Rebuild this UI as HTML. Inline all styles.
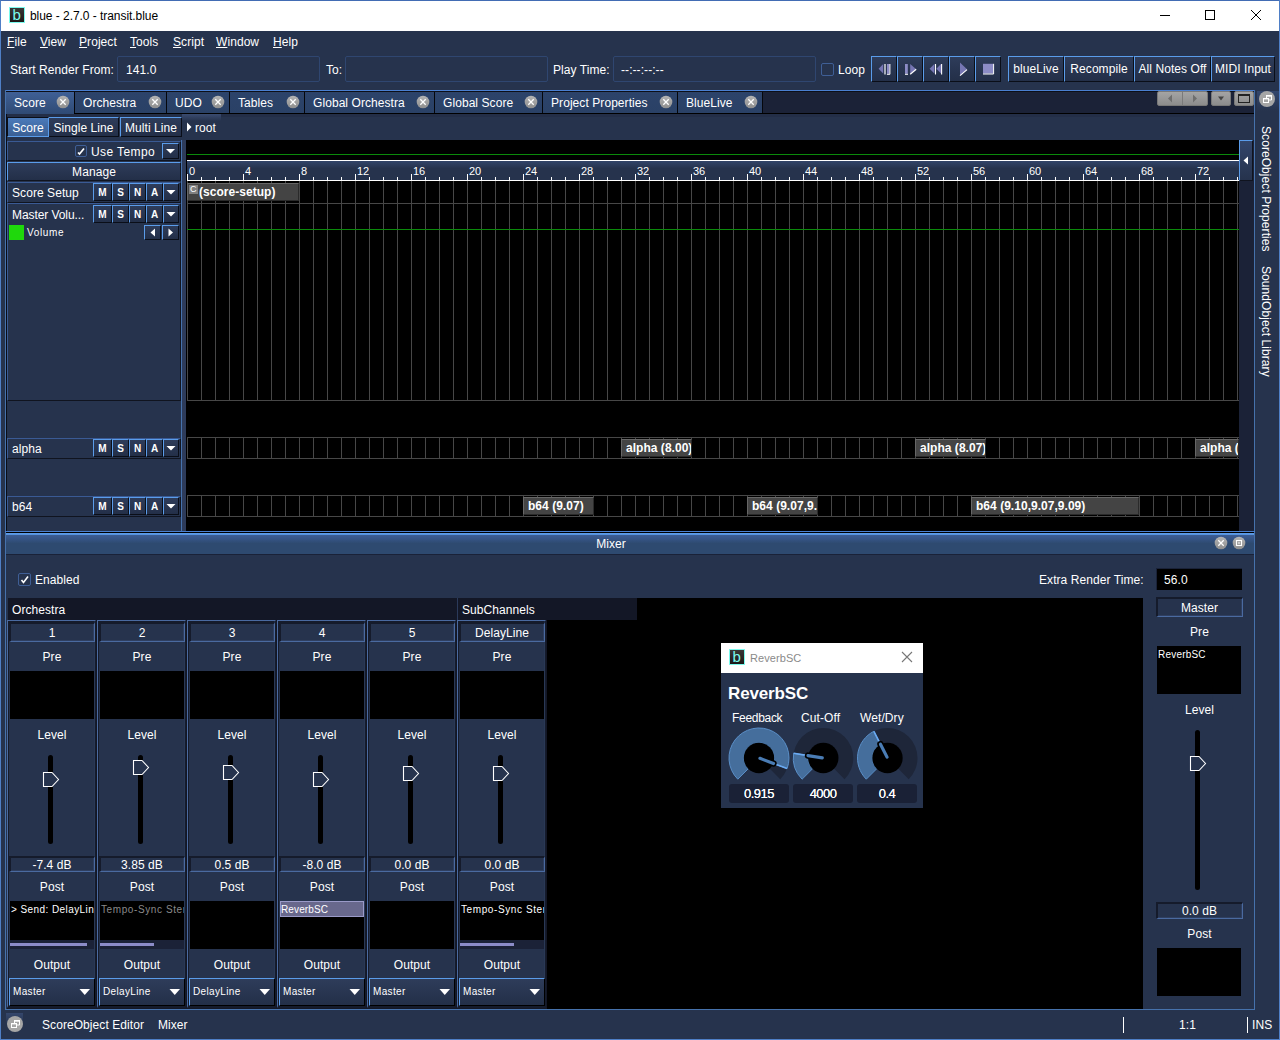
<!DOCTYPE html><html><head><meta charset="utf-8"><title>blue - 2.7.0 - transit.blue</title><style>
*{box-sizing:border-box;margin:0;padding:0}
html,body{width:1280px;height:1040px;overflow:hidden;background:#26334d}
body{font-family:"Liberation Sans",sans-serif;font-size:12px;letter-spacing:.07px;color:#fff;position:relative}
.a{position:absolute}
.t{position:absolute;white-space:nowrap;line-height:16px;height:16px}
.btn{position:absolute;border-top:1px solid #5a9cea;border-left:1px solid #5a9cea;border-right:1px solid #0a0e18;border-bottom:1px solid #0a0e18;background:linear-gradient(#2e3c5a,#232f48);text-align:center;white-space:nowrap;overflow:hidden}
.fld{position:absolute;border:1px solid #2f4670;border-radius:2px;background:#26334d}
.blk{position:absolute;background:#000}
.c{text-align:center}
u{text-decoration:underline}
</style></head><body>
<div class="a" style="left:0;top:0;width:1280px;height:31px;background:#fff;border-top:1px solid #426cb4;border-left:1px solid #4f7fc6"></div>
<div class="a" style="left:0;top:31px;width:1px;height:1009px;background:#4f7fc6"></div>
<div class="a" style="left:9px;top:7px;width:16px;height:16px;background:linear-gradient(#3a3636,#1c1818);border:1px solid #7cfaee"></div>
<div class="t" style="left:12.500px;top:7px;font-size:15px;color:#7cfaee">b</div>
<div class="t" style="left:30px;top:8px;font-size:12px;letter-spacing:-.05px;color:#000">blue - 2.7.0 - transit.blue</div>
<svg class="a" style="left:1150px;top:5px" width="125" height="22" viewBox="0 0 125 22"><g stroke="#000" stroke-width="1" fill="none"><path d="M10 10.500h10"/><rect x="55.500" y="5.500" width="9" height="9"/><path d="M101 5l10 10M111 5l-10 10"/></g></svg>
<div class="t" style="left:7px;top:34px"><u>F</u>ile</div>
<div class="t" style="left:40px;top:34px"><u>V</u>iew</div>
<div class="t" style="left:79px;top:34px"><u>P</u>roject</div>
<div class="t" style="left:130px;top:34px"><u>T</u>ools</div>
<div class="t" style="left:173px;top:34px"><u>S</u>cript</div>
<div class="t" style="left:216px;top:34px"><u>W</u>indow</div>
<div class="t" style="left:273px;top:34px"><u>H</u>elp</div>
<div class="t" style="left:10px;top:62px">Start Render From:</div>
<div class="fld" style="left:117px;top:56px;width:203px;height:26px"></div>
<div class="t" style="left:126px;top:62px">141.0</div>
<div class="t" style="left:326px;top:62px">To:</div>
<div class="fld" style="left:345px;top:56px;width:203px;height:26px"></div>
<div class="t" style="left:553px;top:62px">Play Time:</div>
<div class="fld" style="left:613px;top:56px;width:203px;height:26px"></div>
<div class="t" style="left:621px;top:62px">--:--:--:--</div>
<div class="a" style="left:821px;top:63px;width:13px;height:13px;border:1px solid #3f5f96;border-radius:2px"></div>
<div class="t" style="left:838px;top:62px">Loop</div>
<div class="btn" style="left:871px;top:56px;width:26px;height:26px"></div><svg class="a" style="left:871px;top:56px" width="26" height="26" viewBox="0 0 26 26"><path d="M12.200 8v9.600L7.600 12.800z" fill="#7676b4"/><path d="M14 8v10.400" stroke="#fff" stroke-width="1.200"/><rect x="16" y="8" width="2.400" height="9.800" fill="#8c8cc6"/><path d="M18.900 8v10.300h-3" stroke="#fff" stroke-width="1" fill="none"/></svg>
<div class="btn" style="left:897px;top:56px;width:26px;height:26px"></div><svg class="a" style="left:897px;top:56px" width="26" height="26" viewBox="0 0 26 26"><rect x="8" y="8" width="2.800" height="9.800" fill="#8c8cc6"/><path d="M8 18.300h3" stroke="#fff" stroke-width="1"/><path d="M13.200 8v9.800l6-4.600z" fill="#7676b4"/><path d="M13.200 18.300l6-5" stroke="#fff" stroke-width="1.200"/></svg>
<div class="btn" style="left:923px;top:56px;width:26px;height:26px"></div><svg class="a" style="left:923px;top:56px" width="26" height="26" viewBox="0 0 26 26"><path d="M11.400 8v9.600L6.600 12.800z" fill="#7676b4"/><path d="M12.500 8v10.500" stroke="#fff" stroke-width="1.100"/><path d="M18 8v9.600l-4.600-4.800z" fill="#7676b4"/><path d="M18.600 8v10.500" stroke="#fff" stroke-width="1.100"/></svg>
<div class="btn" style="left:949px;top:56px;width:26px;height:26px"></div><svg class="a" style="left:949px;top:56px" width="26" height="26" viewBox="0 0 26 26"><path d="M11 6.500v13l7-6.300z" fill="#7676b4"/><path d="M11 19.600l7-6" stroke="#fff" stroke-width="1.200"/></svg>
<div class="btn" style="left:975px;top:56px;width:26px;height:26px"></div><svg class="a" style="left:975px;top:56px" width="26" height="26" viewBox="0 0 26 26"><rect x="8" y="7.800" width="10" height="9.800" fill="#8c8cc6"/><path d="M18.600 7.800v10.200H8" stroke="#fff" stroke-width="1" fill="none"/></svg>
<div class="btn" style="left:1008px;top:56px;width:56px;height:26px;line-height:25px">blueLive</div>
<div class="btn" style="left:1064px;top:56px;width:70px;height:26px;line-height:25px">Recompile</div>
<div class="btn" style="left:1134px;top:56px;width:77px;height:26px;line-height:25px">All Notes Off</div>
<div class="btn" style="left:1211px;top:56px;width:64px;height:26px;line-height:25px">MIDI Input</div>
<div class="a" style="left:6px;top:90px;width:1249px;height:1px;background:#4a7fd0"></div>
<div class="a" style="left:6px;top:91px;width:1249px;height:1px;background:#0c0f18"></div>
<div class="a" style="left:6px;top:92px;width:1249px;height:21px;background:#1b2237"></div>
<div class="a" style="left:6px;top:113px;width:1249px;height:1px;background:#000"></div>
<div class="a" style="left:6px;top:114px;width:1249px;height:3px;background:#232e47"></div>
<div class="a" style="left:5px;top:90px;width:1px;height:442px;background:#4672ac"></div>
<div class="a" style="left:6px;top:114px;width:1px;height:417px;background:#0a0d16"></div>
<div class="a" style="left:1254px;top:90px;width:1px;height:442px;background:#4672ac"></div>
<div class="a" style="left:6px;top:92px;width:68px;height:22px;background:linear-gradient(#3f6096,#2f4a74)"></div>
<div class="a" style="left:74px;top:92px;width:1px;height:21px;background:#05070c"></div>
<div class="t" style="left:14px;top:95px">Score</div>
<svg class="a" style="left:56px;top:95px" width="14" height="14" viewBox="0 0 14 14"><defs><linearGradient id="cg0" x1="0" y1="0" x2="0" y2="1"><stop offset="0" stop-color="#b4b4b4"/><stop offset="1" stop-color="#8e8e8e"/></linearGradient></defs><circle cx="7" cy="7" r="6.300" fill="url(#cg0)"/><path d="M4.300 4.300l5.400 5.400M9.700 4.300l-5.400 5.400" stroke="#fff" stroke-width="1.300"/></svg>
<div class="a" style="left:75px;top:92px;width:92px;height:21px;background:linear-gradient(#2c436a,#2a4166);border-right:1px solid #05070c"></div>
<div class="t" style="left:83px;top:95px">Orchestra</div>
<svg class="a" style="left:148px;top:95px" width="14" height="14" viewBox="0 0 14 14"><defs><linearGradient id="cg1" x1="0" y1="0" x2="0" y2="1"><stop offset="0" stop-color="#b4b4b4"/><stop offset="1" stop-color="#8e8e8e"/></linearGradient></defs><circle cx="7" cy="7" r="6.300" fill="url(#cg1)"/><path d="M4.300 4.300l5.400 5.400M9.700 4.300l-5.400 5.400" stroke="#fff" stroke-width="1.300"/></svg>
<div class="a" style="left:167px;top:92px;width:63px;height:21px;background:linear-gradient(#2c436a,#2a4166);border-right:1px solid #05070c"></div>
<div class="t" style="left:175px;top:95px">UDO</div>
<svg class="a" style="left:211px;top:95px" width="14" height="14" viewBox="0 0 14 14"><defs><linearGradient id="cg2" x1="0" y1="0" x2="0" y2="1"><stop offset="0" stop-color="#b4b4b4"/><stop offset="1" stop-color="#8e8e8e"/></linearGradient></defs><circle cx="7" cy="7" r="6.300" fill="url(#cg2)"/><path d="M4.300 4.300l5.400 5.400M9.700 4.300l-5.400 5.400" stroke="#fff" stroke-width="1.300"/></svg>
<div class="a" style="left:230px;top:92px;width:75px;height:21px;background:linear-gradient(#2c436a,#2a4166);border-right:1px solid #05070c"></div>
<div class="t" style="left:238px;top:95px">Tables</div>
<svg class="a" style="left:286px;top:95px" width="14" height="14" viewBox="0 0 14 14"><defs><linearGradient id="cg3" x1="0" y1="0" x2="0" y2="1"><stop offset="0" stop-color="#b4b4b4"/><stop offset="1" stop-color="#8e8e8e"/></linearGradient></defs><circle cx="7" cy="7" r="6.300" fill="url(#cg3)"/><path d="M4.300 4.300l5.400 5.400M9.700 4.300l-5.400 5.400" stroke="#fff" stroke-width="1.300"/></svg>
<div class="a" style="left:305px;top:92px;width:130px;height:21px;background:linear-gradient(#2c436a,#2a4166);border-right:1px solid #05070c"></div>
<div class="t" style="left:313px;top:95px">Global Orchestra</div>
<svg class="a" style="left:416px;top:95px" width="14" height="14" viewBox="0 0 14 14"><defs><linearGradient id="cg4" x1="0" y1="0" x2="0" y2="1"><stop offset="0" stop-color="#b4b4b4"/><stop offset="1" stop-color="#8e8e8e"/></linearGradient></defs><circle cx="7" cy="7" r="6.300" fill="url(#cg4)"/><path d="M4.300 4.300l5.400 5.400M9.700 4.300l-5.400 5.400" stroke="#fff" stroke-width="1.300"/></svg>
<div class="a" style="left:435px;top:92px;width:108px;height:21px;background:linear-gradient(#2c436a,#2a4166);border-right:1px solid #05070c"></div>
<div class="t" style="left:443px;top:95px">Global Score</div>
<svg class="a" style="left:524px;top:95px" width="14" height="14" viewBox="0 0 14 14"><defs><linearGradient id="cg5" x1="0" y1="0" x2="0" y2="1"><stop offset="0" stop-color="#b4b4b4"/><stop offset="1" stop-color="#8e8e8e"/></linearGradient></defs><circle cx="7" cy="7" r="6.300" fill="url(#cg5)"/><path d="M4.300 4.300l5.400 5.400M9.700 4.300l-5.400 5.400" stroke="#fff" stroke-width="1.300"/></svg>
<div class="a" style="left:543px;top:92px;width:135px;height:21px;background:linear-gradient(#2c436a,#2a4166);border-right:1px solid #05070c"></div>
<div class="t" style="left:551px;top:95px">Project Properties</div>
<svg class="a" style="left:659px;top:95px" width="14" height="14" viewBox="0 0 14 14"><defs><linearGradient id="cg6" x1="0" y1="0" x2="0" y2="1"><stop offset="0" stop-color="#b4b4b4"/><stop offset="1" stop-color="#8e8e8e"/></linearGradient></defs><circle cx="7" cy="7" r="6.300" fill="url(#cg6)"/><path d="M4.300 4.300l5.400 5.400M9.700 4.300l-5.400 5.400" stroke="#fff" stroke-width="1.300"/></svg>
<div class="a" style="left:678px;top:92px;width:85px;height:21px;background:linear-gradient(#2c436a,#2a4166);border-right:1px solid #05070c"></div>
<div class="t" style="left:686px;top:95px">BlueLive</div>
<svg class="a" style="left:744px;top:95px" width="14" height="14" viewBox="0 0 14 14"><defs><linearGradient id="cg7" x1="0" y1="0" x2="0" y2="1"><stop offset="0" stop-color="#b4b4b4"/><stop offset="1" stop-color="#8e8e8e"/></linearGradient></defs><circle cx="7" cy="7" r="6.300" fill="url(#cg7)"/><path d="M4.300 4.300l5.400 5.400M9.700 4.300l-5.400 5.400" stroke="#fff" stroke-width="1.300"/></svg>
<div class="a" style="left:1157px;top:91px;width:51px;height:15px;background:linear-gradient(#a4a4a4,#8c8c8c);border:1px solid #787878;border-radius:2px"></div>
<div class="a" style="left:1182px;top:92px;width:1px;height:13px;background:#7a7a7a"></div>
<svg class="a" style="left:1157px;top:91px" width="51" height="15"><path d="M15 3.5v8l-4-4zM36 3.5v8l4-4z" fill="#6e6e6e"/></svg>
<div class="a" style="left:1211px;top:91px;width:20px;height:15px;background:linear-gradient(#a4a4a4,#8c8c8c);border:1px solid #787878;border-radius:2px"></div>
<svg class="a" style="left:1211px;top:91px" width="20" height="15"><path d="M7 5.5h6l-3 4z" fill="#444"/></svg>
<div class="a" style="left:1234px;top:91px;width:20px;height:15px;background:linear-gradient(#a4a4a4,#8c8c8c);border:1px solid #787878;border-radius:2px"></div>
<div class="a" style="left:1238px;top:94px;width:12px;height:9px;border:1px solid #222;border-top:2px solid #222"></div>
<div class="a" style="left:1257px;top:91px;width:23px;height:20px;background:linear-gradient(#33466c,#26334d)"></div>
<svg class="a" style="left:1259px;top:91px" width="16" height="16" viewBox="0 0 16 16"><circle cx="8" cy="8" r="8" fill="#a6a6a6"/><path d="M7.500 7v-2h5v4h-2.500" stroke="#fff" stroke-width="1" fill="none"/><path d="M7 4.700h6" stroke="#fff" stroke-width="1.400"/><rect x="4.500" y="7.500" width="5" height="4" stroke="#fff" stroke-width="1" fill="none"/><path d="M4 7.700h6" stroke="#fff" stroke-width="1.400"/></svg>
<div class="t" style="left:1258px;top:126px;transform-origin:0 0;transform:translate(16px,0) rotate(90deg)">ScoreObject Properties</div>
<div class="t" style="left:1258px;top:266px;transform-origin:0 0;transform:translate(16px,0) rotate(90deg)">SoundObject Library</div>
<div class="btn" style="left:7px;top:117px;width:42px;height:20px;line-height:20px;background:linear-gradient(#4b7aba,#3a5f94);border-top-color:#0a0e18;border-left-color:#0a0e18;border-right-color:#5a9cea;border-bottom-color:#5a9cea">Score</div>
<div class="btn" style="left:49px;top:117px;width:70px;height:20px;line-height:20px;border-left:none">Single Line</div>
<div class="btn" style="left:120px;top:117px;width:62px;height:20px;line-height:20px">Multi Line</div>
<div class="a" style="left:182px;top:114px;width:39px;height:7px;background:linear-gradient(#3a4b70,#26334d)"></div>
<svg class="a" style="left:186px;top:122px" width="6" height="10"><path d="M1 0.500v9l4.500-4.500z" fill="#fff"/></svg>
<div class="t" style="left:195px;top:120px">root</div>
<div class="a" style="left:7px;top:141px;width:174px;height:20px;border-top:1px solid #3a5a94;border-left:1px solid #3a5a94;border-bottom:1px solid #10141f;border-right:1px solid #10141f"></div>
<div class="a" style="left:75px;top:145px;width:12px;height:12px;border:1px solid #3f5f96;border-radius:2px"></div>
<svg class="a" style="left:75px;top:145px" width="12" height="12"><path d="M3 7.500l1.500 1.500L9 3.500" stroke="#fff" stroke-width="1.700" fill="none"/></svg>
<div class="t" style="left:91px;top:144px;letter-spacing:.4px">Use Tempo</div>
<div class="btn" style="left:162px;top:143px;width:17px;height:16px"><svg width="15" height="14" style="display:block"><path d="M3 5h9l-4.500 4.500z" fill="#fff"/></svg></div>
<div class="btn" style="left:7px;top:162px;width:174px;height:19px;line-height:18px;border-right-color:#10141f;border-bottom-color:#10141f">Manage</div>
<div class="a" style="left:7px;top:182px;width:174px;height:21px;border-top:1px solid #3a5a94;border-left:1px solid #3a5a94;border-bottom:1px solid #10141f;border-right:1px solid #10141f"></div>
<div class="t" style="left:12px;top:185px">Score Setup</div>
<div class="btn" style="left:93px;top:183px;width:19px;height:18px;line-height:18px;font-weight:bold;font-size:10px;letter-spacing:0">M</div>
<div class="btn" style="left:112px;top:183px;width:17px;height:18px;line-height:18px;font-weight:bold;font-size:10px;letter-spacing:0">S</div>
<div class="btn" style="left:129px;top:183px;width:17px;height:18px;line-height:18px;font-weight:bold;font-size:10px;letter-spacing:0">N</div>
<div class="btn" style="left:146px;top:183px;width:17px;height:18px;line-height:18px;font-weight:bold;font-size:10px;letter-spacing:0">A</div>
<div class="btn" style="left:163px;top:183px;width:16px;height:18px"><svg width="14" height="16" style="display:block"><path d="M2.500 6h9l-4.500 4.500z" fill="#fff"/></svg></div>
<div class="a" style="left:7px;top:203px;width:174px;height:198px;border-top:1px solid #3a5a94;border-left:1px solid #3a5a94;border-bottom:1px solid #10141f;border-right:1px solid #10141f"></div>
<div class="t" style="left:12px;top:207px;letter-spacing:-.08px">Master Volu...</div>
<div class="btn" style="left:93px;top:205px;width:19px;height:18px;line-height:18px;font-weight:bold;font-size:10px;letter-spacing:0">M</div>
<div class="btn" style="left:112px;top:205px;width:17px;height:18px;line-height:18px;font-weight:bold;font-size:10px;letter-spacing:0">S</div>
<div class="btn" style="left:129px;top:205px;width:17px;height:18px;line-height:18px;font-weight:bold;font-size:10px;letter-spacing:0">N</div>
<div class="btn" style="left:146px;top:205px;width:17px;height:18px;line-height:18px;font-weight:bold;font-size:10px;letter-spacing:0">A</div>
<div class="btn" style="left:163px;top:205px;width:16px;height:18px"><svg width="14" height="16" style="display:block"><path d="M2.500 6h9l-4.500 4.500z" fill="#fff"/></svg></div>
<div class="a" style="left:9px;top:225px;width:15px;height:15px;background:#1fd80c"></div>
<div class="t" style="left:27px;top:225px;font-size:10px;letter-spacing:.65px">Volume</div>
<div class="btn" style="left:144px;top:225px;width:17px;height:15px"><svg width="15" height="13" style="display:block"><path d="M10 2.500v8l-4.500-4z" fill="#fff"/></svg></div>
<div class="btn" style="left:162px;top:225px;width:17px;height:15px"><svg width="15" height="13" style="display:block"><path d="M5.500 2.500v8l4.500-4z" fill="#fff"/></svg></div>
<div class="a" style="left:7px;top:438px;width:174px;height:21px;border-top:1px solid #3a5a94;border-left:1px solid #3a5a94;border-bottom:1px solid #10141f;border-right:1px solid #10141f"></div>
<div class="t" style="left:12px;top:441px">alpha</div>
<div class="btn" style="left:93px;top:439px;width:19px;height:18px;line-height:18px;font-weight:bold;font-size:10px;letter-spacing:0">M</div>
<div class="btn" style="left:112px;top:439px;width:17px;height:18px;line-height:18px;font-weight:bold;font-size:10px;letter-spacing:0">S</div>
<div class="btn" style="left:129px;top:439px;width:17px;height:18px;line-height:18px;font-weight:bold;font-size:10px;letter-spacing:0">N</div>
<div class="btn" style="left:146px;top:439px;width:17px;height:18px;line-height:18px;font-weight:bold;font-size:10px;letter-spacing:0">A</div>
<div class="btn" style="left:163px;top:439px;width:16px;height:18px"><svg width="14" height="16" style="display:block"><path d="M2.500 6h9l-4.500 4.500z" fill="#fff"/></svg></div>
<div class="a" style="left:7px;top:496px;width:174px;height:21px;border-top:1px solid #3a5a94;border-left:1px solid #3a5a94;border-bottom:1px solid #10141f;border-right:1px solid #10141f"></div>
<div class="t" style="left:12px;top:499px">b64</div>
<div class="btn" style="left:93px;top:497px;width:19px;height:18px;line-height:18px;font-weight:bold;font-size:10px;letter-spacing:0">M</div>
<div class="btn" style="left:112px;top:497px;width:17px;height:18px;line-height:18px;font-weight:bold;font-size:10px;letter-spacing:0">S</div>
<div class="btn" style="left:129px;top:497px;width:17px;height:18px;line-height:18px;font-weight:bold;font-size:10px;letter-spacing:0">N</div>
<div class="btn" style="left:146px;top:497px;width:17px;height:18px;line-height:18px;font-weight:bold;font-size:10px;letter-spacing:0">A</div>
<div class="btn" style="left:163px;top:497px;width:16px;height:18px"><svg width="14" height="16" style="display:block"><path d="M2.500 6h9l-4.500 4.500z" fill="#fff"/></svg></div>
<div class="a" style="left:181px;top:140px;width:1px;height:391px;background:#4672ac"></div>
<div class="a" style="left:182px;top:140px;width:4px;height:391px;background:#2d3b5a"></div>
<div class="blk" style="left:186px;top:140px;width:1053px;height:391px"></div>
<div class="a" style="left:1239px;top:140px;width:15px;height:391px;background:#1b2237"></div>
<div class="a" style="left:187px;top:154px;width:1052px;height:1px;background:#0b8a0b"></div>
<div class="a" style="left:187px;top:160px;width:1052px;height:21px;background:linear-gradient(#34476d,#26334d 40%,#26334d)"></div>
<div class="a" style="left:187px;top:160px;width:1052px;height:1px;background:#fff"></div>
<div class="a" style="left:187px;top:180px;width:1052px;height:1px;background:#fff"></div>
<div class="a" style="left:187px;top:177px;width:1052px;height:3px;background:repeating-linear-gradient(90deg,#fff 0,#fff 1px,transparent 1px,transparent 14px)"></div>
<div class="a" style="left:187px;top:174px;width:1052px;height:3px;background:repeating-linear-gradient(90deg,#fff 0,#fff 1px,transparent 1px,transparent 56px)"></div>
<div class="t" style="left:189px;top:163px;font-size:11px;letter-spacing:0">0</div>
<div class="t" style="left:245px;top:163px;font-size:11px;letter-spacing:0">4</div>
<div class="t" style="left:301px;top:163px;font-size:11px;letter-spacing:0">8</div>
<div class="t" style="left:357px;top:163px;font-size:11px;letter-spacing:0">12</div>
<div class="t" style="left:413px;top:163px;font-size:11px;letter-spacing:0">16</div>
<div class="t" style="left:469px;top:163px;font-size:11px;letter-spacing:0">20</div>
<div class="t" style="left:525px;top:163px;font-size:11px;letter-spacing:0">24</div>
<div class="t" style="left:581px;top:163px;font-size:11px;letter-spacing:0">28</div>
<div class="t" style="left:637px;top:163px;font-size:11px;letter-spacing:0">32</div>
<div class="t" style="left:693px;top:163px;font-size:11px;letter-spacing:0">36</div>
<div class="t" style="left:749px;top:163px;font-size:11px;letter-spacing:0">40</div>
<div class="t" style="left:805px;top:163px;font-size:11px;letter-spacing:0">44</div>
<div class="t" style="left:861px;top:163px;font-size:11px;letter-spacing:0">48</div>
<div class="t" style="left:917px;top:163px;font-size:11px;letter-spacing:0">52</div>
<div class="t" style="left:973px;top:163px;font-size:11px;letter-spacing:0">56</div>
<div class="t" style="left:1029px;top:163px;font-size:11px;letter-spacing:0">60</div>
<div class="t" style="left:1085px;top:163px;font-size:11px;letter-spacing:0">64</div>
<div class="t" style="left:1141px;top:163px;font-size:11px;letter-spacing:0">68</div>
<div class="t" style="left:1197px;top:163px;font-size:11px;letter-spacing:0">72</div>
<div class="a" style="left:1239px;top:140px;width:14px;height:41px;background:linear-gradient(#33456a,#26334d);border-top:1px solid #5a9cea;border-left:1px solid #5a9cea;border-right:1px solid #10141f;border-bottom:1px solid #10141f"></div>
<svg class="a" style="left:1243px;top:156px" width="6" height="9"><path d="M5 0.500v8L0.500 4.500z" fill="#fff"/></svg>
<div class="a" style="left:187px;top:181px;width:1052px;height:23px;background:repeating-linear-gradient(90deg,#474747 0,#474747 1px,transparent 1px,transparent 14px);border-top:1px solid transparent;border-bottom:1px solid #474747"></div>
<div class="a" style="left:187px;top:203px;width:1052px;height:198px;background:repeating-linear-gradient(90deg,#474747 0,#474747 1px,transparent 1px,transparent 14px);border-top:1px solid #474747;border-bottom:1px solid #474747"></div>
<div class="a" style="left:187px;top:437px;width:1052px;height:22px;background:repeating-linear-gradient(90deg,#474747 0,#474747 1px,transparent 1px,transparent 14px);border-top:1px solid #474747;border-bottom:1px solid #474747"></div>
<div class="a" style="left:187px;top:495px;width:1052px;height:22px;background:repeating-linear-gradient(90deg,#474747 0,#474747 1px,transparent 1px,transparent 14px);border-top:1px solid #474747;border-bottom:1px solid #474747"></div>
<div class="a" style="left:187px;top:229px;width:1052px;height:1px;background:#0b8a0b"></div>
<div class="a" style="left:187px;top:183px;width:112px;height:18px;background:#444;border-top:1px solid #666;border-left:1px solid #666;border-right:1px solid #2a2a2a;border-bottom:1px solid #2a2a2a;overflow:hidden"><div class="t" style="left:11px;top:0px;font-weight:bold;letter-spacing:.03px">(score-setup)</div></div>
<div class="a" style="left:189px;top:185px;width:9px;height:9px;background:#808080"></div>
<div class="t" style="left:190px;top:182px;font-size:9px;line-height:15px;letter-spacing:0">C</div>
<div class="a" style="left:621px;top:439px;width:71px;height:18px;background:#444;border-top:1px solid #666;border-left:1px solid #666;border-right:1px solid #2a2a2a;border-bottom:1px solid #2a2a2a;overflow:hidden"><div class="t" style="left:4px;top:0px;font-weight:bold;letter-spacing:.03px">alpha (8.00)</div></div>
<div class="a" style="left:915px;top:439px;width:71px;height:18px;background:#444;border-top:1px solid #666;border-left:1px solid #666;border-right:1px solid #2a2a2a;border-bottom:1px solid #2a2a2a;overflow:hidden"><div class="t" style="left:4px;top:0px;font-weight:bold;letter-spacing:.03px">alpha (8.07)</div></div>
<div class="a" style="left:1195px;top:439px;width:44px;height:18px;background:#444;border-top:1px solid #666;border-left:1px solid #666;border-right:1px solid #2a2a2a;border-bottom:1px solid #2a2a2a;overflow:hidden"><div class="t" style="left:4px;top:0px;font-weight:bold;letter-spacing:.03px">alpha (8.07)</div></div>
<div class="a" style="left:523px;top:497px;width:71px;height:18px;background:#444;border-top:1px solid #666;border-left:1px solid #666;border-right:1px solid #2a2a2a;border-bottom:1px solid #2a2a2a;overflow:hidden"><div class="t" style="left:4px;top:0px;font-weight:bold;letter-spacing:.03px">b64 (9.07)</div></div>
<div class="a" style="left:747px;top:497px;width:71px;height:18px;background:#444;border-top:1px solid #666;border-left:1px solid #666;border-right:1px solid #2a2a2a;border-bottom:1px solid #2a2a2a;overflow:hidden"><div class="t" style="left:4px;top:0px;font-weight:bold;letter-spacing:.03px">b64 (9.07,9.</div></div>
<div class="a" style="left:971px;top:497px;width:168px;height:18px;background:#444;border-top:1px solid #666;border-left:1px solid #666;border-right:1px solid #2a2a2a;border-bottom:1px solid #2a2a2a;overflow:hidden"><div class="t" style="left:4px;top:0px;font-weight:bold;letter-spacing:.03px">b64 (9.10,9.07,9.09)</div></div>
<div class="a" style="left:5px;top:531px;width:1250px;height:1px;background:#4a7fd0"></div>
<div class="a" style="left:5px;top:532px;width:1px;height:478px;background:#4672ac"></div>
<div class="a" style="left:1254px;top:532px;width:1px;height:478px;background:#4672ac"></div>
<div class="a" style="left:6px;top:532px;width:1248px;height:1px;background:#000"></div>
<div class="a" style="left:6px;top:533px;width:1248px;height:2px;background:linear-gradient(#5e9fec,#548fdc)"></div>
<div class="a" style="left:6px;top:535px;width:1248px;height:20px;background:linear-gradient(#3c5c92,#37568a 15%,#2e4a70 45%,#2e4a70);border-bottom:1px solid #1a2238"></div>
<div class="t c" style="left:561px;top:536px;width:100px">Mixer</div>
<svg class="a" style="left:1214px;top:536px" width="14" height="14" viewBox="0 0 14 14"><circle cx="7" cy="7" r="6.300" fill="url(#cg0)"/><path d="M4.300 4.300l5.400 5.400M9.700 4.300l-5.400 5.400" stroke="#fff" stroke-width="1.300"/></svg>
<svg class="a" style="left:1232px;top:536px" width="14" height="14" viewBox="0 0 14 14"><circle cx="7" cy="7" r="6.300" fill="url(#cg0)"/><rect x="4.500" y="4.500" width="5" height="5" stroke="#fff" stroke-width="1.100" fill="none"/><rect x="6.300" y="6.300" width="1.400" height="1.400" fill="#fff"/></svg>
<div class="a" style="left:6px;top:1009px;width:1248px;height:1px;background:#4672ac"></div>
<div class="a" style="left:18px;top:573px;width:13px;height:13px;border:1px solid #3f5f96;border-radius:2px"></div>
<svg class="a" style="left:18px;top:573px" width="13" height="13"><path d="M3.500 7l2 2.500L10 3.500" stroke="#fff" stroke-width="1.600" fill="none"/></svg>
<div class="t" style="left:35px;top:572px">Enabled</div>
<div class="t" style="left:1039px;top:572px">Extra Render Time:</div>
<div class="blk" style="left:1156px;top:568px;width:86px;height:22px;border-top:1px solid #1a2238;border-left:1px solid #1a2238"></div>
<div class="t" style="left:1164px;top:572px">56.0</div>
<div class="a" style="left:8px;top:598px;width:449px;height:22px;background:#131726"></div>
<div class="t" style="left:12px;top:602px">Orchestra</div>
<div class="a" style="left:458px;top:598px;width:179px;height:22px;background:#131726"></div>
<div class="t" style="left:462px;top:602px">SubChannels</div>
<div class="a" style="left:457px;top:598px;width:1px;height:22px;background:#2b3a5a"></div>
<div class="blk" style="left:547px;top:620px;width:596px;height:389px"></div>
<div class="blk" style="left:637px;top:598px;width:506px;height:24px"></div>
<div class="a" style="left:7px;top:620px;width:540px;height:389px;background:#131726"></div>
<div class="a" style="left:7px;top:620px;width:89px;height:388px;background:#26334d;border-top:1px solid #4a6aa0;border-left:1px solid #4a6aa0;border-right:1px solid #151b2b;border-bottom:2px solid #151b2b"><div style="height:100%;border-top:1px solid #151b2b;border-left:1px solid #151b2b;border-right:1px solid #2a3956"></div></div>
<div class="a" style="left:9px;top:622px;width:86px;height:20px;border-top:2px solid #151b2b;border-left:2px solid #151b2b;border-bottom:1px solid #4a6aa0;border-right:1px solid #4a6aa0"><div style="height:100%;border-bottom:1px solid #2f3f60;border-right:1px solid #2f3f60"></div></div>
<div class="t c" style="left:9px;top:625px;width:86px">1</div>
<div class="t c" style="left:8px;top:649px;width:88px">Pre</div>
<div class="blk" style="left:10px;top:671px;width:84px;height:48px"></div>
<div class="t c" style="left:8px;top:727px;width:88px">Level</div>
<div class="blk" style="left:48px;top:755px;width:5px;height:89px;border-radius:2.500px"></div>
<svg class="a" style="left:42px;top:771px" width="18" height="17" viewBox="0 0 18 17"><path d="M1.500 1.500h8.500l6.500 7-6.500 7H1.500z" fill="#26334d" stroke="#fff" stroke-width="1.100"/></svg>
<div class="a" style="left:9px;top:856px;width:86px;height:16px;border-top:2px solid #151b2b;border-left:2px solid #151b2b;border-bottom:1px solid #4a6aa0;border-right:1px solid #4a6aa0"><div style="height:100%;border-bottom:1px solid #2f3f60;border-right:1px solid #2f3f60"></div></div>
<div class="t c" style="left:9px;top:857px;width:86px">-7.4 dB</div>
<div class="t c" style="left:8px;top:879px;width:88px">Post</div>
<div class="blk" style="left:10px;top:901px;width:84px;height:48px;overflow:hidden">
<div class="t" style="left:1px;top:1px;font-size:10px;letter-spacing:.42px;color:#fff">&gt; Send: DelayLine</div>
<div class="a" style="left:0;top:39px;width:84px;height:9px;background:#1b2237"></div><div class="a" style="left:0;top:42px;width:77px;height:3px;background:#8c8cc8"></div>
</div>
<div class="t c" style="left:8px;top:957px;width:88px">Output</div>
<div class="btn" style="left:9px;top:978px;width:86px;height:28px;text-align:left;border-right-color:#000;border-bottom-color:#000"><div class="t" style="left:3px;top:5px;font-size:10px;letter-spacing:.35px">Master</div><svg class="a" style="left:69px;top:9px" width="12" height="8"><path d="M0.500 1h10.500l-5.250 6z" fill="#fff"/></svg></div>
<div class="a" style="left:97px;top:620px;width:89px;height:388px;background:#26334d;border-top:1px solid #4a6aa0;border-left:1px solid #4a6aa0;border-right:1px solid #151b2b;border-bottom:2px solid #151b2b"><div style="height:100%;border-top:1px solid #151b2b;border-left:1px solid #151b2b;border-right:1px solid #2a3956"></div></div>
<div class="a" style="left:99px;top:622px;width:86px;height:20px;border-top:2px solid #151b2b;border-left:2px solid #151b2b;border-bottom:1px solid #4a6aa0;border-right:1px solid #4a6aa0"><div style="height:100%;border-bottom:1px solid #2f3f60;border-right:1px solid #2f3f60"></div></div>
<div class="t c" style="left:99px;top:625px;width:86px">2</div>
<div class="t c" style="left:98px;top:649px;width:88px">Pre</div>
<div class="blk" style="left:100px;top:671px;width:84px;height:48px"></div>
<div class="t c" style="left:98px;top:727px;width:88px">Level</div>
<div class="blk" style="left:138px;top:755px;width:5px;height:89px;border-radius:2.500px"></div>
<svg class="a" style="left:132px;top:759px" width="18" height="17" viewBox="0 0 18 17"><path d="M1.500 1.500h8.500l6.500 7-6.500 7H1.500z" fill="#26334d" stroke="#fff" stroke-width="1.100"/></svg>
<div class="a" style="left:99px;top:856px;width:86px;height:16px;border-top:2px solid #151b2b;border-left:2px solid #151b2b;border-bottom:1px solid #4a6aa0;border-right:1px solid #4a6aa0"><div style="height:100%;border-bottom:1px solid #2f3f60;border-right:1px solid #2f3f60"></div></div>
<div class="t c" style="left:99px;top:857px;width:86px">3.85 dB</div>
<div class="t c" style="left:98px;top:879px;width:88px">Post</div>
<div class="blk" style="left:100px;top:901px;width:84px;height:48px;overflow:hidden">
<div class="t" style="left:1px;top:1px;font-size:10px;letter-spacing:.6px;color:#8a8a8a">Tempo-Sync Stereo</div>
<div class="a" style="left:0;top:39px;width:84px;height:9px;background:#1b2237"></div><div class="a" style="left:0;top:42px;width:54px;height:3px;background:#8c8cc8"></div>
</div>
<div class="t c" style="left:98px;top:957px;width:88px">Output</div>
<div class="btn" style="left:99px;top:978px;width:86px;height:28px;text-align:left;border-right-color:#000;border-bottom-color:#000"><div class="t" style="left:3px;top:5px;font-size:10px;letter-spacing:.35px">DelayLine</div><svg class="a" style="left:69px;top:9px" width="12" height="8"><path d="M0.500 1h10.500l-5.250 6z" fill="#fff"/></svg></div>
<div class="a" style="left:187px;top:620px;width:89px;height:388px;background:#26334d;border-top:1px solid #4a6aa0;border-left:1px solid #4a6aa0;border-right:1px solid #151b2b;border-bottom:2px solid #151b2b"><div style="height:100%;border-top:1px solid #151b2b;border-left:1px solid #151b2b;border-right:1px solid #2a3956"></div></div>
<div class="a" style="left:189px;top:622px;width:86px;height:20px;border-top:2px solid #151b2b;border-left:2px solid #151b2b;border-bottom:1px solid #4a6aa0;border-right:1px solid #4a6aa0"><div style="height:100%;border-bottom:1px solid #2f3f60;border-right:1px solid #2f3f60"></div></div>
<div class="t c" style="left:189px;top:625px;width:86px">3</div>
<div class="t c" style="left:188px;top:649px;width:88px">Pre</div>
<div class="blk" style="left:190px;top:671px;width:84px;height:48px"></div>
<div class="t c" style="left:188px;top:727px;width:88px">Level</div>
<div class="blk" style="left:228px;top:755px;width:5px;height:89px;border-radius:2.500px"></div>
<svg class="a" style="left:222px;top:764px" width="18" height="17" viewBox="0 0 18 17"><path d="M1.500 1.500h8.500l6.500 7-6.500 7H1.500z" fill="#26334d" stroke="#fff" stroke-width="1.100"/></svg>
<div class="a" style="left:189px;top:856px;width:86px;height:16px;border-top:2px solid #151b2b;border-left:2px solid #151b2b;border-bottom:1px solid #4a6aa0;border-right:1px solid #4a6aa0"><div style="height:100%;border-bottom:1px solid #2f3f60;border-right:1px solid #2f3f60"></div></div>
<div class="t c" style="left:189px;top:857px;width:86px">0.5 dB</div>
<div class="t c" style="left:188px;top:879px;width:88px">Post</div>
<div class="blk" style="left:190px;top:901px;width:84px;height:48px;overflow:hidden">
</div>
<div class="t c" style="left:188px;top:957px;width:88px">Output</div>
<div class="btn" style="left:189px;top:978px;width:86px;height:28px;text-align:left;border-right-color:#000;border-bottom-color:#000"><div class="t" style="left:3px;top:5px;font-size:10px;letter-spacing:.35px">DelayLine</div><svg class="a" style="left:69px;top:9px" width="12" height="8"><path d="M0.500 1h10.500l-5.250 6z" fill="#fff"/></svg></div>
<div class="a" style="left:277px;top:620px;width:89px;height:388px;background:#26334d;border-top:1px solid #4a6aa0;border-left:1px solid #4a6aa0;border-right:1px solid #151b2b;border-bottom:2px solid #151b2b"><div style="height:100%;border-top:1px solid #151b2b;border-left:1px solid #151b2b;border-right:1px solid #2a3956"></div></div>
<div class="a" style="left:279px;top:622px;width:86px;height:20px;border-top:2px solid #151b2b;border-left:2px solid #151b2b;border-bottom:1px solid #4a6aa0;border-right:1px solid #4a6aa0"><div style="height:100%;border-bottom:1px solid #2f3f60;border-right:1px solid #2f3f60"></div></div>
<div class="t c" style="left:279px;top:625px;width:86px">4</div>
<div class="t c" style="left:278px;top:649px;width:88px">Pre</div>
<div class="blk" style="left:280px;top:671px;width:84px;height:48px"></div>
<div class="t c" style="left:278px;top:727px;width:88px">Level</div>
<div class="blk" style="left:318px;top:755px;width:5px;height:89px;border-radius:2.500px"></div>
<svg class="a" style="left:312px;top:771px" width="18" height="17" viewBox="0 0 18 17"><path d="M1.500 1.500h8.500l6.500 7-6.500 7H1.500z" fill="#26334d" stroke="#fff" stroke-width="1.100"/></svg>
<div class="a" style="left:279px;top:856px;width:86px;height:16px;border-top:2px solid #151b2b;border-left:2px solid #151b2b;border-bottom:1px solid #4a6aa0;border-right:1px solid #4a6aa0"><div style="height:100%;border-bottom:1px solid #2f3f60;border-right:1px solid #2f3f60"></div></div>
<div class="t c" style="left:279px;top:857px;width:86px">-8.0 dB</div>
<div class="t c" style="left:278px;top:879px;width:88px">Post</div>
<div class="blk" style="left:280px;top:901px;width:84px;height:48px;overflow:hidden">
<div class="a" style="left:0;top:0;width:84px;height:16px;background:#68688c;border:1px solid #9a9ac8"></div>
<div class="t" style="left:1px;top:1px;font-size:10px;letter-spacing:.13px;color:#fff">ReverbSC</div>
</div>
<div class="t c" style="left:278px;top:957px;width:88px">Output</div>
<div class="btn" style="left:279px;top:978px;width:86px;height:28px;text-align:left;border-right-color:#000;border-bottom-color:#000"><div class="t" style="left:3px;top:5px;font-size:10px;letter-spacing:.35px">Master</div><svg class="a" style="left:69px;top:9px" width="12" height="8"><path d="M0.500 1h10.500l-5.250 6z" fill="#fff"/></svg></div>
<div class="a" style="left:367px;top:620px;width:89px;height:388px;background:#26334d;border-top:1px solid #4a6aa0;border-left:1px solid #4a6aa0;border-right:1px solid #151b2b;border-bottom:2px solid #151b2b"><div style="height:100%;border-top:1px solid #151b2b;border-left:1px solid #151b2b;border-right:1px solid #2a3956"></div></div>
<div class="a" style="left:369px;top:622px;width:86px;height:20px;border-top:2px solid #151b2b;border-left:2px solid #151b2b;border-bottom:1px solid #4a6aa0;border-right:1px solid #4a6aa0"><div style="height:100%;border-bottom:1px solid #2f3f60;border-right:1px solid #2f3f60"></div></div>
<div class="t c" style="left:369px;top:625px;width:86px">5</div>
<div class="t c" style="left:368px;top:649px;width:88px">Pre</div>
<div class="blk" style="left:370px;top:671px;width:84px;height:48px"></div>
<div class="t c" style="left:368px;top:727px;width:88px">Level</div>
<div class="blk" style="left:408px;top:755px;width:5px;height:89px;border-radius:2.500px"></div>
<svg class="a" style="left:402px;top:765px" width="18" height="17" viewBox="0 0 18 17"><path d="M1.500 1.500h8.500l6.500 7-6.500 7H1.500z" fill="#26334d" stroke="#fff" stroke-width="1.100"/></svg>
<div class="a" style="left:369px;top:856px;width:86px;height:16px;border-top:2px solid #151b2b;border-left:2px solid #151b2b;border-bottom:1px solid #4a6aa0;border-right:1px solid #4a6aa0"><div style="height:100%;border-bottom:1px solid #2f3f60;border-right:1px solid #2f3f60"></div></div>
<div class="t c" style="left:369px;top:857px;width:86px">0.0 dB</div>
<div class="t c" style="left:368px;top:879px;width:88px">Post</div>
<div class="blk" style="left:370px;top:901px;width:84px;height:48px;overflow:hidden">
</div>
<div class="t c" style="left:368px;top:957px;width:88px">Output</div>
<div class="btn" style="left:369px;top:978px;width:86px;height:28px;text-align:left;border-right-color:#000;border-bottom-color:#000"><div class="t" style="left:3px;top:5px;font-size:10px;letter-spacing:.35px">Master</div><svg class="a" style="left:69px;top:9px" width="12" height="8"><path d="M0.500 1h10.500l-5.250 6z" fill="#fff"/></svg></div>
<div class="a" style="left:457px;top:620px;width:89px;height:388px;background:#26334d;border-top:1px solid #4a6aa0;border-left:1px solid #4a6aa0;border-right:1px solid #151b2b;border-bottom:2px solid #151b2b"><div style="height:100%;border-top:1px solid #151b2b;border-left:1px solid #151b2b;border-right:1px solid #2a3956"></div></div>
<div class="a" style="left:459px;top:622px;width:86px;height:20px;border-top:2px solid #151b2b;border-left:2px solid #151b2b;border-bottom:1px solid #4a6aa0;border-right:1px solid #4a6aa0"><div style="height:100%;border-bottom:1px solid #2f3f60;border-right:1px solid #2f3f60"></div></div>
<div class="t c" style="left:459px;top:625px;width:86px">DelayLine</div>
<div class="t c" style="left:458px;top:649px;width:88px">Pre</div>
<div class="blk" style="left:460px;top:671px;width:84px;height:48px"></div>
<div class="t c" style="left:458px;top:727px;width:88px">Level</div>
<div class="blk" style="left:498px;top:755px;width:5px;height:89px;border-radius:2.500px"></div>
<svg class="a" style="left:492px;top:765px" width="18" height="17" viewBox="0 0 18 17"><path d="M1.500 1.500h8.500l6.500 7-6.500 7H1.500z" fill="#26334d" stroke="#fff" stroke-width="1.100"/></svg>
<div class="a" style="left:459px;top:856px;width:86px;height:16px;border-top:2px solid #151b2b;border-left:2px solid #151b2b;border-bottom:1px solid #4a6aa0;border-right:1px solid #4a6aa0"><div style="height:100%;border-bottom:1px solid #2f3f60;border-right:1px solid #2f3f60"></div></div>
<div class="t c" style="left:459px;top:857px;width:86px">0.0 dB</div>
<div class="t c" style="left:458px;top:879px;width:88px">Post</div>
<div class="blk" style="left:460px;top:901px;width:84px;height:48px;overflow:hidden">
<div class="t" style="left:1px;top:1px;font-size:10px;letter-spacing:.6px;color:#fff">Tempo-Sync Stereo</div>
<div class="a" style="left:0;top:39px;width:84px;height:9px;background:#1b2237"></div><div class="a" style="left:0;top:42px;width:54px;height:3px;background:#8c8cc8"></div>
</div>
<div class="t c" style="left:458px;top:957px;width:88px">Output</div>
<div class="btn" style="left:459px;top:978px;width:86px;height:28px;text-align:left;border-right-color:#000;border-bottom-color:#000"><div class="t" style="left:3px;top:5px;font-size:10px;letter-spacing:.35px">Master</div><svg class="a" style="left:69px;top:9px" width="12" height="8"><path d="M0.500 1h10.500l-5.250 6z" fill="#fff"/></svg></div>
<div class="a" style="left:1156px;top:597px;width:87px;height:20px;border-top:2px solid #151b2b;border-left:2px solid #151b2b;border-bottom:1px solid #4a6aa0;border-right:1px solid #4a6aa0"><div style="height:100%;border-bottom:1px solid #2f3f60;border-right:1px solid #2f3f60"></div></div>
<div class="t c" style="left:1156px;top:600px;width:87px">Master</div>
<div class="t c" style="left:1156px;top:624px;width:87px">Pre</div>
<div class="blk" style="left:1157px;top:646px;width:84px;height:48px"><div class="t" style="left:1px;top:1px;font-size:10px;letter-spacing:.2px">ReverbSC</div></div>
<div class="t c" style="left:1156px;top:702px;width:87px">Level</div>
<div class="blk" style="left:1195px;top:730px;width:5px;height:160px;border-radius:2.500px"></div>
<svg class="a" style="left:1189px;top:755px" width="18" height="17" viewBox="0 0 18 17"><path d="M1.500 1.500h8.500l6.500 7-6.500 7H1.500z" fill="#26334d" stroke="#fff" stroke-width="1.100"/></svg>
<div class="a" style="left:1156px;top:902px;width:87px;height:17px;border-top:2px solid #151b2b;border-left:2px solid #151b2b;border-bottom:1px solid #4a6aa0;border-right:1px solid #4a6aa0"><div style="height:100%;border-bottom:1px solid #2f3f60;border-right:1px solid #2f3f60"></div></div>
<div class="t c" style="left:1156px;top:903px;width:87px">0.0 dB</div>
<div class="t c" style="left:1156px;top:926px;width:87px">Post</div>
<div class="blk" style="left:1157px;top:948px;width:84px;height:48px"></div>
<div class="a" style="left:6px;top:1013px;width:17px;height:12px;background:linear-gradient(#35476c,#26334d)"></div>
<svg class="a" style="left:7px;top:1016px" width="16" height="16" viewBox="0 0 16 16"><circle cx="8" cy="8" r="8" fill="#a6a6a6"/><path d="M7.500 7v-2h5v4h-2.500" stroke="#fff" stroke-width="1" fill="none"/><path d="M7 4.700h6" stroke="#fff" stroke-width="1.400"/><rect x="4.500" y="7.500" width="5" height="4" stroke="#fff" stroke-width="1" fill="none"/><path d="M4 7.700h6" stroke="#fff" stroke-width="1.400"/></svg>
<div class="t" style="left:42px;top:1017px">ScoreObject Editor</div>
<div class="t" style="left:158px;top:1017px">Mixer</div>
<div class="a" style="left:1123px;top:1017px;width:1px;height:16px;background:#fff"></div>
<div class="t" style="left:1179px;top:1017px">1:1</div>
<div class="a" style="left:1247px;top:1017px;width:1px;height:16px;background:#fff"></div>
<div class="t" style="left:1252px;top:1017px">INS</div>
<div class="a" style="left:0;top:1039px;width:1280px;height:1px;background:#4f7fc6"></div>
<div class="a" style="left:1279px;top:0;width:1px;height:1040px;background:#4f7fc6"></div>
<div class="a" style="left:721px;top:643px;width:202px;height:165px;background:#26334d"></div>
<div class="a" style="left:721px;top:643px;width:202px;height:30px;background:#fff"></div>
<div class="a" style="left:729px;top:649px;width:16px;height:16px;background:linear-gradient(#3a3636,#1c1818);border:1px solid #7cfaee"></div>
<div class="t" style="left:732.500px;top:649px;font-size:15px;color:#7cfaee">b</div>
<div class="t" style="left:750px;top:650px;font-size:11px;color:#8a8a8a">ReverbSC</div>
<svg class="a" style="left:901px;top:651px" width="12" height="12"><path d="M1 1l10 10M11 1L1 11" stroke="#777" stroke-width="1.100"/></svg>
<div class="t" style="left:728px;top:683px;font-size:17px;font-weight:bold;line-height:22px;height:22px;letter-spacing:-.15px">ReverbSC</div>
<svg class="a" style="left:0;top:0" width="1280" height="1040"><path d="M737.79 779.21A30 30 0 1 1 780.21 779.21L769.61 768.61A15 15 0 1 0 748.39 768.61Z" fill="#1e2639"/><path d="M737.79 779.21A30 30 0 1 1 787.06 768.60L773.03 763.30A15 15 0 1 0 748.39 768.61Z" fill="#456e9c" stroke="#5a8fc8" stroke-width="1"/><circle cx="759.0" cy="758.0" r="15.200" fill="#000"/><path d="M774.90 764.01L787.06 768.60" stroke="#6aaaf2" stroke-width="1.600"/><path d="M759.94 758.35L773.50 763.48" stroke="#000" stroke-width="6.400" stroke-linecap="round"/><path d="M759.94 758.35L773.50 763.48" stroke="#4a7cb4" stroke-width="3.200" stroke-linecap="round"/></svg>
<div class="t" style="left:732px;top:710px;letter-spacing:-.3px">Feedback</div>
<div class="a" style="left:729px;top:784px;width:60px;height:19px;background:#1a2136;border-radius:3px"></div>
<div class="t c" style="left:729px;top:786px;width:60px;font-size:13px;letter-spacing:-.55px;text-shadow:0 0 .6px #fff">0.915</div>
<svg class="a" style="left:0;top:0" width="1280" height="1040"><path d="M802.09 779.21A30 30 0 1 1 844.51 779.21L833.91 768.61A15 15 0 1 0 812.69 768.61Z" fill="#1e2639"/><path d="M802.09 779.21A30 30 0 0 1 793.67 753.31L808.48 755.65A15 15 0 0 0 812.69 768.61Z" fill="#456e9c" stroke="#5a8fc8" stroke-width="1"/><circle cx="823.3" cy="758.0" r="15.200" fill="#000"/><path d="M806.51 755.34L793.67 753.31" stroke="#6aaaf2" stroke-width="1.600"/><path d="M822.31 757.84L807.99 755.58" stroke="#000" stroke-width="6.400" stroke-linecap="round"/><path d="M822.31 757.84L807.99 755.58" stroke="#4a7cb4" stroke-width="3.200" stroke-linecap="round"/></svg>
<div class="t" style="left:801px;top:710px;letter-spacing:.1px">Cut-Off</div>
<div class="a" style="left:793px;top:784px;width:60px;height:19px;background:#1a2136;border-radius:3px"></div>
<div class="t c" style="left:793px;top:786px;width:60px;font-size:13px;letter-spacing:-.55px;text-shadow:0 0 .6px #fff">4000</div>
<svg class="a" style="left:0;top:0" width="1280" height="1040"><path d="M866.29 779.21A30 30 0 1 1 908.71 779.21L898.11 768.61A15 15 0 1 0 876.89 768.61Z" fill="#1e2639"/><path d="M866.29 779.21A30 30 0 0 1 873.88 731.27L880.69 744.63A15 15 0 0 0 876.89 768.61Z" fill="#456e9c" stroke="#5a8fc8" stroke-width="1"/><circle cx="887.5" cy="758.0" r="15.200" fill="#000"/><path d="M879.78 742.85L873.88 731.27" stroke="#6aaaf2" stroke-width="1.600"/><path d="M887.05 757.11L880.46 744.19" stroke="#000" stroke-width="6.400" stroke-linecap="round"/><path d="M887.05 757.11L880.46 744.19" stroke="#4a7cb4" stroke-width="3.200" stroke-linecap="round"/></svg>
<div class="t" style="left:860px;top:710px;letter-spacing:.1px">Wet/Dry</div>
<div class="a" style="left:857px;top:784px;width:60px;height:19px;background:#1a2136;border-radius:3px"></div>
<div class="t c" style="left:857px;top:786px;width:60px;font-size:13px;letter-spacing:-.55px;text-shadow:0 0 .6px #fff">0.4</div>
</body></html>
